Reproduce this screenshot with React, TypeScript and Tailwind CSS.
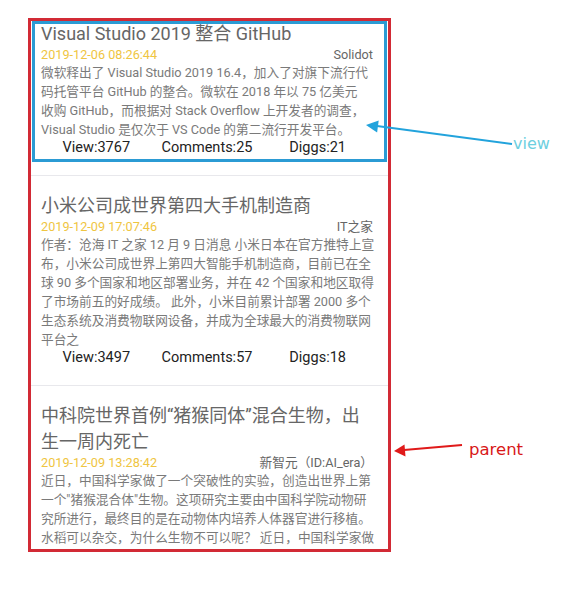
import React from 'react';

type News = {
  title: string[];
  date: string;
  source: string;
  body: string[];
  stats?: { view: number; comments: number; diggs: number };
};

const NEWS: News[] = [
  {
    title: ['Visual Studio 2019 整合 GitHub'],
    date: '2019-12-06 08:26:44',
    source: 'Solidot',
    body: [
      '微软释出了 Visual Studio 2019 16.4，加入了对旗下流行代',
      '码托管平台 GitHub 的整合。微软在 2018 年以 75 亿美元',
      '收购 GitHub，而根据对 Stack Overflow 上开发者的调查，',
      'Visual Studio 是仅次于 VS Code 的第二流行开发平台。',
    ],
    stats: { view: 3767, comments: 25, diggs: 21 },
  },
  {
    title: ['小米公司成世界第四大手机制造商'],
    date: '2019-12-09 17:07:46',
    source: 'IT之家',
    body: [
      '作者：沧海 IT 之家 12 月 9 日消息 小米日本在官方推特上宣',
      '布，小米公司成世界上第四大智能手机制造商，目前已在全',
      '球 90 多个国家和地区部署业务，并在 42 个国家和地区取得',
      '了市场前五的好成绩。 此外，小米目前累计部署 2000 多个',
      '生态系统及消费物联网设备，并成为全球最大的消费物联网',
      '平台之',
    ],
    stats: { view: 3497, comments: 57, diggs: 18 },
  },
  {
    title: ['中科院世界首例“猪猴同体”混合生物，出', '生一周内死亡'],
    date: '2019-12-09 13:28:42',
    source: '新智元（ID:AI_era）',
    body: [
      '近日，中国科学家做了一个突破性的实验，创造出世界上第',
      '一个"猪猴混合体"生物。这项研究主要由中国科学院动物研',
      '究所进行，最终目的是在动物体内培养人体器官进行移植。',
      '水稻可以杂交，为什么生物不可以呢？ 近日，中国科学家做',
    ],
  },
];

const NewsItem = ({ item, first }: { item: News; first: boolean }) => (
  <div
    className={`relative pl-[10px] pr-[15px] pb-[18px] ${
      first ? '' : 'border-t border-[#e8e8ec] pt-[17px]'
    }`}
  >
    {/* highlight of the "view" */}
    {first && (
      <div className="pointer-events-none absolute left-[1px] top-0 w-[355px] h-[141px] border-[3px] border-[#2b9bd4]" />
    )}
    <div className="text-[18px] leading-[26px] text-[#666] whitespace-nowrap">
      {item.title.map((t) => (
        <div key={t}>{t}</div>
      ))}
    </div>
    <div className="flex justify-between text-[12.7px] leading-[16px]">
      <span className="text-[#efc541]">{item.date}</span>
      <span className="text-[#666]">{item.source}</span>
    </div>
    <div className="text-[12.7px] leading-[19px] text-[#7a7a7a] whitespace-nowrap">
      {item.body.map((line) => (
        <div key={line}>{line}</div>
      ))}
    </div>
    {item.stats && (
      <div className="grid grid-cols-3 text-center text-[14.5px] leading-[18px] text-[#222]">
        <span>View:{item.stats.view}</span>
        <span>Comments:{item.stats.comments}</span>
        <span>Diggs:{item.stats.diggs}</span>
      </div>
    )}
  </div>
);

export default function App() {
  return (
    <div className="relative w-[563px] h-[597px] bg-white overflow-hidden pl-[28px] pt-[18px] font-['Roboto','Noto_Sans_CJK_SC',sans-serif]">
      <div className="w-[363px] h-[534px] border-[3px] border-[#d22a35] overflow-hidden">
        {NEWS.map((n, i) => (
          <NewsItem key={n.date} item={n} first={i === 0} />
        ))}
      </div>

      {/* annotation arrows */}
      <svg className="pointer-events-none absolute left-0 top-0" width="563" height="597">
        <line x1="512" y1="144" x2="377" y2="126" stroke="#22a3dc" strokeWidth="2" />
        <polygon points="366,125 378.7,120.6 377.1,132.5" fill="#22a3dc" />
        <line x1="462" y1="445" x2="404" y2="450" stroke="#e01a1a" strokeWidth="2" />
        <polygon points="394,451 405.5,456.5 404.5,444.5" fill="#e01a1a" />
      </svg>
      <span className="absolute left-[513px] top-[134px] text-[16px] leading-[20px] text-[#6dcfe0] font-['DejaVu_Sans',sans-serif]">
        view
      </span>
      <span className="absolute left-[469px] top-[440px] text-[16.5px] leading-[20px] text-[#d81818] font-['DejaVu_Sans',sans-serif]">
        parent
      </span>
    </div>
  );
}
